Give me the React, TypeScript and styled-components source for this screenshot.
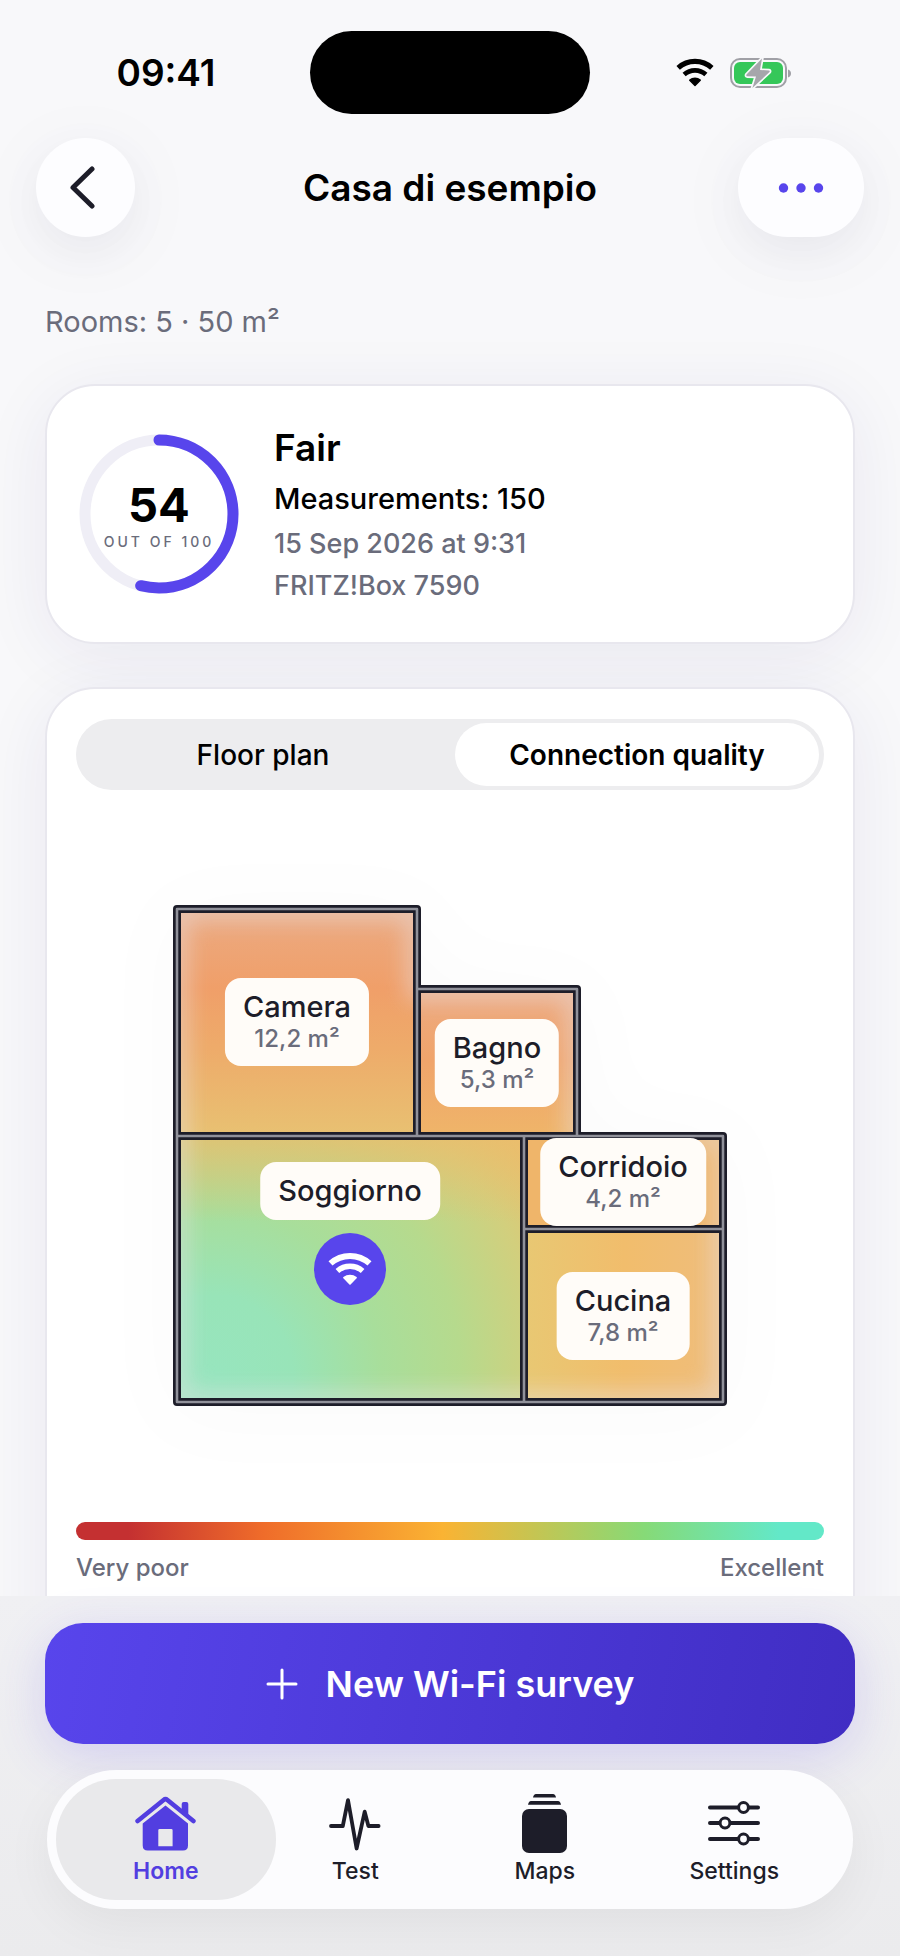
import React, { useState } from "react";
import styled, { createGlobalStyle } from "styled-components";

const GlobalStyle = createGlobalStyle`
  * {
    box-sizing: border-box;
  }

  body {
    margin: 0;
    background-color: #f8f8fa;
    color: #000;
    font-family: Inter, "Liberation Sans", sans-serif;
    -webkit-font-smoothing: antialiased;
  }

  button {
    border: none;
    padding: 0;
    color: inherit;
    font-family: inherit;
    cursor: pointer;
  }
`;

const rooms = [
  { name: "Camera", area: "12,2 m²", x: 124, y: 117 },
  { name: "Bagno", area: "5,3 m²", x: 324, y: 158 },
  { name: "Soggiorno", area: "", x: 177, y: 286 },
  { name: "Corridoio", area: "4,2 m²", x: 450, y: 277 },
  { name: "Cucina", area: "7,8 m²", x: 450, y: 411 },
];

const PLAN_WIDTH = 554;
const PLAN_HEIGHT = 501;

const OUTLINE = "M4 4H244V84H404V231H550V497H4Z";
const WALLS = `${OUTLINE} M4 231H404 M244 84V231 M351 231V497 M351 324H550`;

const WifiIcon = ({ width }: { width: number }) => (
  <svg width={width} viewBox="0 0 37 28" fill="none" stroke="currentColor">
    <path d="M2.1 9.6A24.5 24.5 0 0 1 34.9 9.6" strokeWidth="5" />
    <path d="M7.9 16A16 16 0 0 1 29.1 16" strokeWidth="4.6" />
    <path
      d="M13.4 21.6A8 8 0 0 1 23.6 21.6L18.5 26.8Z"
      fill="currentColor"
      strokeWidth="1.4"
      strokeLinejoin="round"
    />
  </svg>
);

const BatteryIcon = () => (
  <svg width="62" height="30" viewBox="0 0 62 30">
    <rect x="1" y="1" width="55" height="28" rx="9" fill="none" stroke="#a0a0a6" strokeWidth="2" />
    <rect x="4" y="4" width="49" height="22" rx="6" fill="#35c759" />
    <path d="M58 11.5C60.4 12.4 61 14 61 15.5S60.4 18.6 58 19.5Z" fill="#a0a0a6" />
    <path
      d="M32 0.5L16.5 16.6Q16 18 17 18.2L26 18.6L22.4 30L39.5 14Q40.2 12.6 39 12.4L30 12Z"
      fill="#a6a6ab"
      stroke="#f8f8fa"
      strokeWidth="3.4"
      paintOrder="stroke"
      strokeLinejoin="round"
    />
  </svg>
);

const HomeIcon = () => (
  <svg width="61" height="60" viewBox="0 -3 61 60" fill="currentColor">
    <path d="M46.7 18V8Q46.7 6 48.7 6H51.3Q53.3 6 53.3 8V22Z" />
    <path
      d="M2.6 25L28.6 4Q30.5 2.4 32.4 4L58.4 25"
      fill="none"
      stroke="currentColor"
      strokeWidth="4.6"
      strokeLinecap="round"
    />
    <path
      fillRule="evenodd"
      d="M30.5 9.6L53 27.5V49.5Q53 54.5 48 54.5H12.7Q7.7 54.5 7.7 49.5V27.5ZM24.5 33Q23.3 33 23.3 34.2V50.3H37.6V34.2Q37.6 33 36.4 33Z"
    />
  </svg>
);

const TestIcon = () => (
  <svg width="52" height="60" viewBox="0 -5 52 60" fill="none" stroke="currentColor">
    <path
      d="M2 28H13.8L19 2.2L27.6 50.5L35.7 13.6L39.4 28H49.6"
      strokeWidth="3.8"
      strokeLinecap="round"
      strokeLinejoin="round"
    />
  </svg>
);

const MapsIcon = () => (
  <svg width="45" height="60" viewBox="0 -1 45 60" fill="currentColor">
    <path d="M11 3.5Q11.6 0 14 0H31Q33.4 0 34 3.5Z" />
    <path d="M6 10.8Q6.6 7 9 7H36Q38.4 7 39 10.8Z" />
    <rect y="15" width="45" height="44" rx="7" />
  </svg>
);

const SettingsIcon = () => (
  <svg width="52" height="60" viewBox="0 -8 52 60" fill="none" stroke="currentColor">
    <path
      d="M2 6.5H30M41 6.5H50M2 22H12M22 22H50M2 38H30M41 38H50"
      strokeWidth="4"
      strokeLinecap="round"
    />
    <circle cx="35.5" cy="6.5" r="4.9" strokeWidth="3" fill="#fcfcfe" />
    <circle cx="17" cy="22" r="4.9" strokeWidth="3" fill="#fcfcfe" />
    <circle cx="35.5" cy="38" r="4.9" strokeWidth="3" fill="#fcfcfe" />
  </svg>
);

const tabs = [
  { label: "Home", icon: <HomeIcon /> },
  { label: "Test", icon: <TestIcon /> },
  { label: "Maps", icon: <MapsIcon /> },
  { label: "Settings", icon: <SettingsIcon /> },
];

const ScoreRing = ({ score }: { score: number }) => (
  <Ring>
    <RingDrawing viewBox="0 0 160 160" fill="none" strokeWidth="11">
      <circle cx="80" cy="80" r="74" stroke="#efeef6" />
      <circle
        cx="80"
        cy="80"
        r="74"
        stroke="#5845ec"
        strokeLinecap="round"
        pathLength="100"
        strokeDasharray={`${score} 100`}
        transform="rotate(-90 80 80)"
      />
    </RingDrawing>
    <RingText>
      <Score>{score}</Score>
      <ScoreCaption>OUT OF 100</ScoreCaption>
    </RingText>
  </Ring>
);

const FloorPlan = () => (
  <Plan>
    <PlanDrawing viewBox={`0 0 ${PLAN_WIDTH} ${PLAN_HEIGHT}`}>
      <defs>
        <clipPath id="house">
          <path d={OUTLINE} />
        </clipPath>
        <filter id="soft" x="-20%" y="-20%" width="140%" height="140%">
          <feGaussianBlur stdDeviation="11" />
        </filter>
        <linearGradient id="camera" x1="0" y1="0" x2="0" y2="1">
          <stop offset="0" stopColor="#ebab84" />
          <stop offset="0.36" stopColor="#f09f69" />
          <stop offset="0.62" stopColor="#eeab6a" />
          <stop offset="1" stopColor="#e8c172" />
        </linearGradient>
        <linearGradient id="bagno" x1="0" y1="0" x2="0" y2="1">
          <stop offset="0" stopColor="#edaa82" />
          <stop offset="0.5" stopColor="#f0a46b" />
          <stop offset="1" stopColor="#efb569" />
        </linearGradient>
        <linearGradient id="cucina" x1="0" y1="0" x2="1" y2="0">
          <stop offset="0" stopColor="#e8c873" />
          <stop offset="0.5" stopColor="#f1bd6c" />
          <stop offset="1" stopColor="#efbd7c" />
        </linearGradient>
        <radialGradient id="soggiorno" gradientUnits="userSpaceOnUse" cx="40" cy="470" r="400">
          <stop offset="0" stopColor="#97e5be" />
          <stop offset="0.2" stopColor="#98e4b8" />
          <stop offset="0.42" stopColor="#a8de9b" />
          <stop offset="0.62" stopColor="#b6da8d" />
          <stop offset="0.82" stopColor="#d2cf7d" />
          <stop offset="1" stopColor="#ecbe6a" />
        </radialGradient>
        <linearGradient id="warmTop" x1="0" y1="0" x2="0" y2="1">
          <stop offset="0" stopColor="#ecbc6c" stopOpacity="0.75" />
          <stop offset="0.32" stopColor="#ecbc6c" stopOpacity="0" />
        </linearGradient>
      </defs>
      <g clipPath="url(#house)">
        <rect x="0" y="0" width="244" height="231" fill="url(#camera)" />
        <rect x="244" y="80" width="160" height="151" fill="url(#bagno)" />
        <rect x="351" y="231" width="200" height="93" fill="#efb56a" />
        <rect x="351" y="324" width="200" height="174" fill="url(#cucina)" />
        <rect x="0" y="231" width="351" height="268" fill="url(#soggiorno)" />
        <rect x="0" y="231" width="351" height="268" fill="url(#warmTop)" />
        <path
          d={OUTLINE}
          fill="none"
          stroke="#e8e4ea"
          strokeWidth="22"
          opacity="0.48"
          filter="url(#soft)"
        />
      </g>
      <path d={WALLS} fill="none" stroke="#1d1d29" strokeWidth="8" strokeLinejoin="round" />
      <path d={WALLS} fill="none" stroke="#90919a" strokeWidth="2.6" strokeLinejoin="round" />
    </PlanDrawing>
    {rooms.map((room) => (
      <PlanPin key={room.name} $x={room.x} $y={room.y}>
        <RoomTag>
          <RoomName>{room.name}</RoomName>
          {room.area && <RoomArea>{room.area}</RoomArea>}
        </RoomTag>
      </PlanPin>
    ))}
    <PlanPin $x={177} $y={364}>
      <RouterDot>
        <WifiIcon width={44} />
      </RouterDot>
    </PlanPin>
  </Plan>
);

const App = () => {
  const [view, setView] = useState("quality");

  return (
    <Screen>
      <GlobalStyle />
      <StatusBar>
        <Time>09:41</Time>
        <Island />
        <StatusIcons>
          <WifiIcon width={38} />
          <BatteryIcon />
        </StatusIcons>
      </StatusBar>

      <Header>
        <RoundButton aria-label="Back">
          <svg width="26" height="43" viewBox="0 0 26 43" fill="none">
            <path
              d="M23 3L4 21.5L23 40"
              stroke="#1d1d29"
              strokeWidth="5"
              strokeLinecap="round"
              strokeLinejoin="round"
            />
          </svg>
        </RoundButton>
        <Title>Casa di esempio</Title>
        <RoundButton $wide aria-label="More">
          <svg width="46" height="10" viewBox="0 0 46 10" fill="#5845ec">
            <circle cx="5.5" cy="5" r="4.7" />
            <circle cx="23" cy="5" r="4.7" />
            <circle cx="40.5" cy="5" r="4.7" />
          </svg>
        </RoundButton>
      </Header>

      <Content>
        <Summary>Rooms: 5 · 50 m²</Summary>

        <ScoreCard>
          <ScoreRing score={54} />
          <Details>
            <Rating>Fair</Rating>
            <Measurements>Measurements: 150</Measurements>
            <Meta>15 Sep 2026 at 9:31</Meta>
            <Meta>FRITZ!Box 7590</Meta>
          </Details>
        </ScoreCard>

        <PlanCard>
          <Segments role="tablist">
            <Segment
              role="tab"
              aria-selected={view === "plan"}
              $active={view === "plan"}
              onClick={() => setView("plan")}
            >
              Floor plan
            </Segment>
            <Segment
              role="tab"
              aria-selected={view === "quality"}
              $active={view === "quality"}
              onClick={() => setView("quality")}
            >
              Connection quality
            </Segment>
          </Segments>
          <FloorPlan />
          <Scale />
          <ScaleLabels>
            <span>Very poor</span>
            <span>Excellent</span>
          </ScaleLabels>
        </PlanCard>
      </Content>

      <Footer>
        <SurveyButton>
          <svg width="32" height="32" viewBox="0 0 32 32" fill="none">
            <path d="M16 2V30M2 16H30" stroke="#fff" strokeWidth="3" strokeLinecap="round" />
          </svg>
          New Wi-Fi survey
        </SurveyButton>
        <TabBar>
          {tabs.map((tab) => (
            <Tab key={tab.label} href="#" $active={tab.label === "Home"}>
              {tab.icon}
              {tab.label}
            </Tab>
          ))}
        </TabBar>
      </Footer>
    </Screen>
  );
};

export default App;

const Screen = styled.div`
  height: 100vh;
  display: flex;
  flex-direction: column;
  overflow: hidden;
`;

const StatusBar = styled.div`
  display: grid;
  grid-template-columns: 1fr 280px 1fr;
  align-items: center;
  padding: 31px 22px 0;
`;

const Time = styled.div`
  text-align: center;
  font-size: 37px;
  font-weight: 600;
`;

const Island = styled.div`
  height: 83px;
  border-radius: 42px;
  background-color: #000;
`;

const StatusIcons = styled.div`
  display: flex;
  justify-content: center;
  align-items: center;
  gap: 16px;
`;

const Header = styled.header`
  position: relative;
  display: grid;
  grid-template-columns: 1fr auto 1fr;
  align-items: center;
  padding: 24px 36px 0;
`;

const RoundButton = styled.button<{ $wide?: boolean }>`
  display: flex;
  justify-content: center;
  align-items: center;
  justify-self: ${({ $wide }) => ($wide ? "end" : "start")};
  width: ${({ $wide }) => ($wide ? 126 : 99)}px;
  height: 99px;
  border-radius: 50px;
  background-color: #fdfdff;
  box-shadow: 0 12px 80px rgba(40, 30, 110, 0.05), 0 16px 48px rgba(0, 0, 0, 0.04);

  svg {
    margin-right: ${({ $wide }) => ($wide ? 0 : 8)}px;
  }
`;

const Title = styled.h1`
  margin: 0;
  font-size: 37px;
  font-weight: 600;
`;

const Content = styled.main`
  flex: 1;
  min-height: 0;
  padding: 67px 45px 45px;
  overflow-y: auto;
  scrollbar-width: none;
`;

const Summary = styled.p`
  margin: 0;
  font-size: 29px;
  line-height: 36px;
  color: #6a6c7b;
`;

const Card = styled.section`
  border: 2px solid #e8e7ee;
  border-radius: 50px;
  background-color: #fff;
  box-shadow: 0 12px 70px rgba(40, 30, 110, 0.07);
`;

const ScoreCard = styled(Card)`
  display: flex;
  align-items: center;
  gap: 35px;
  margin-top: 44px;
  padding: 39px 32px;
`;

const Ring = styled.div`
  position: relative;
  width: 160px;
  height: 160px;
`;

const RingDrawing = styled.svg`
  display: block;
  width: 100%;
`;

const RingText = styled.div`
  position: absolute;
  inset: 0;
  display: flex;
  flex-direction: column;
  align-items: center;
  justify-content: center;
  padding-top: 8px;
`;

const Score = styled.div`
  font-size: 47px;
  font-weight: 700;
  line-height: 48px;
`;

const ScoreCaption = styled.div`
  font-size: 14px;
  font-weight: 500;
  line-height: 26px;
  letter-spacing: 3px;
  color: #6a6c7b;
  white-space: nowrap;
`;

const Details = styled.div`
  display: flex;
  flex-direction: column;
  gap: 8px;
`;

const Rating = styled.h2`
  margin: 0;
  font-size: 37px;
  font-weight: 600;
  line-height: 46px;
`;

const Measurements = styled.div`
  font-size: 29px;
  font-weight: 500;
  line-height: 40px;
`;

const Meta = styled.div`
  font-size: 27px;
  font-weight: 500;
  line-height: 34px;
  color: #6a6c7b;
`;

const PlanCard = styled(Card)`
  margin-top: 43px;
  padding: 30px 29px 120px;
`;

const Segments = styled.div`
  display: flex;
  gap: 10px;
  padding: 4px 5px;
  border-radius: 36px;
  background-color: #ededef;
`;

const Segment = styled.button<{ $active: boolean }>`
  flex: 1;
  height: 63px;
  border-radius: 32px;
  background-color: ${({ $active }) => ($active ? "#fff" : "transparent")};
  font-size: 28px;
  font-weight: ${({ $active }) => ($active ? 600 : 500)};
`;

const Plan = styled.div`
  position: relative;
  max-width: ${PLAN_WIDTH}px;
  margin: 115px auto 116px;
`;

const PlanDrawing = styled.svg`
  display: block;
  width: 100%;
  filter: drop-shadow(0 8px 40px rgba(0, 0, 0, 0.02));
`;

const PlanPin = styled.div<{ $x: number; $y: number }>`
  position: absolute;
  left: ${({ $x }) => ($x / PLAN_WIDTH) * 100}%;
  top: ${({ $y }) => ($y / PLAN_HEIGHT) * 100}%;
  transform: translate(-50%, -50%);
`;

const RoomTag = styled.div`
  padding: 12px 18px;
  border-radius: 16px;
  background-color: #fffcf8;
  text-align: center;
  white-space: nowrap;
`;

const RoomName = styled.div`
  font-size: 29px;
  font-weight: 500;
  line-height: 34px;
  color: #1d1d29;
`;

const RoomArea = styled.div`
  font-size: 24px;
  font-weight: 500;
  line-height: 30px;
  color: #6a6c7b;
`;

const RouterDot = styled.div`
  display: flex;
  justify-content: center;
  align-items: center;
  width: 72px;
  height: 72px;
  border-radius: 50%;
  background-color: #5845ec;
  color: #fff;
`;

const Scale = styled.div`
  height: 18px;
  border-radius: 9px;
  background: linear-gradient(
    90deg,
    #c43031 7%,
    #ef6c2a 25%,
    #fab333 49%,
    #86da77 76%,
    #63e8c8 94%
  );
`;

const ScaleLabels = styled.div`
  display: flex;
  justify-content: space-between;
  margin-top: 12px;
  font-size: 24px;
  font-weight: 500;
  line-height: 32px;
  color: #6a6c7b;
`;

const Footer = styled.footer`
  position: relative;
  padding: 27px 45px 47px;
  background: linear-gradient(#f0f0f3, #ebebed);
`;

const SurveyButton = styled.button`
  display: flex;
  justify-content: center;
  align-items: center;
  gap: 28px;
  width: 100%;
  height: 121px;
  border-radius: 38px;
  background: linear-gradient(100deg, #5845ec, #402dc3);
  box-shadow: 0 12px 50px rgba(88, 69, 236, 0.18);
  color: #fff;
  font-size: 36px;
  font-weight: 600;
`;

const TabBar = styled.nav`
  position: relative;
  display: grid;
  grid-template-columns: repeat(4, 1fr);
  margin: 26px 2px 0;
  padding: 9px 24px;
  border-radius: 70px;
  background-color: #fcfcfe;
  box-shadow: 0 16px 50px rgba(0, 0, 0, 0.05);
`;

const Tab = styled.a<{ $active: boolean }>`
  display: flex;
  flex-direction: column;
  align-items: center;
  gap: 4px;
  margin: 0 -15px;
  padding: 14px 0 15px;
  border-radius: 60px;
  background-color: ${({ $active }) => ($active ? "#e9e9eb" : "transparent")};
  color: ${({ $active }) => ($active ? "#523ee0" : "#1d1d29")};
  font-size: 23px;
  font-weight: ${({ $active }) => ($active ? 600 : 500)};
  line-height: 28px;
  text-decoration: none;
`;
